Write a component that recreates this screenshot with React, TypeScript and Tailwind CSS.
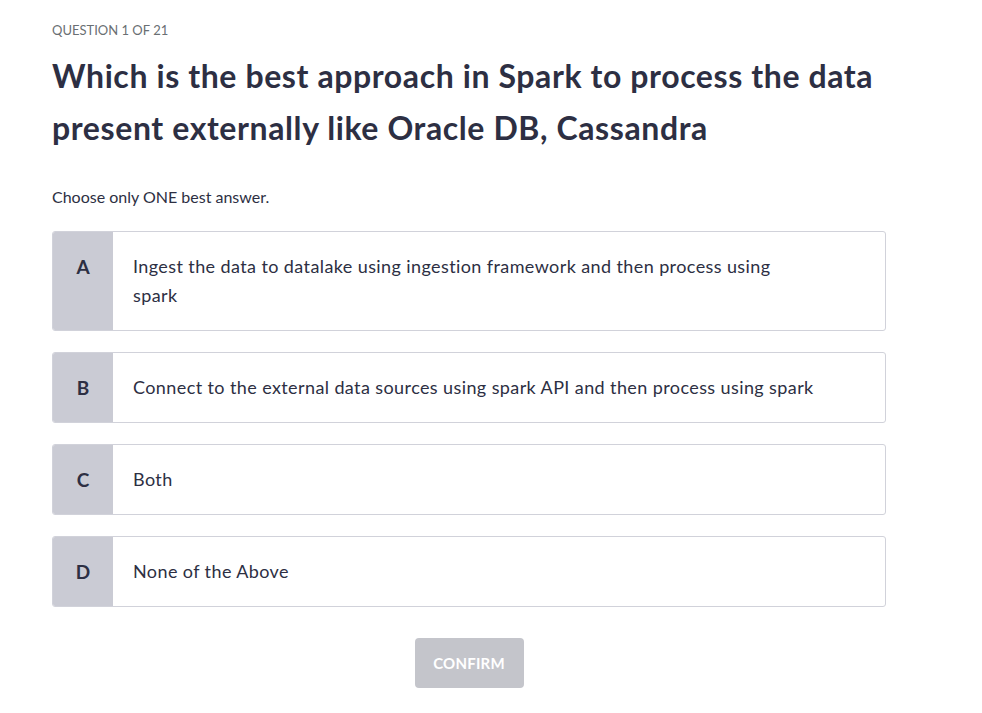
import React from "react";

const options: { k: string; t: React.ReactNode }[] = [
  {
    k: "A",
    t: (
      <>
        Ingest the data to datalake using ingestion framework and then process using
        <br />
        spark
      </>
    ),
  },
  { k: "B", t: "Connect to the external data sources using spark API and then process using spark" },
  { k: "C", t: "Both" },
  { k: "D", t: "None of the Above" },
];

export default function App() {
  return (
    <div
      className="min-h-screen bg-white text-[#2d2f43]"
      style={{ fontFamily: "Lato, 'Open Sans', sans-serif" }}
    >
      <div className="w-[834px] ml-[52px] pt-[21px]">
        <div className="text-[13px] leading-[18px] text-[#6a6f73]">QUESTION 1 OF 21</div>
        <h1 className="mt-[11px] text-[32px] leading-[52px] font-bold tracking-[0.6px] text-[#2d2f43]">
          Which is the best approach in Spark to process the data present externally like Oracle DB, Cassandra
        </h1>
        <div className="mt-[33px] text-[16px] leading-[20px] text-[#2d2f43]">Choose only ONE best answer.</div>
        <div className="mt-[24px] flex flex-col gap-[21px]">
          {options.map((o) => (
            <div key={o.k} className="flex border border-[#d1d2da] rounded-[3px] overflow-hidden bg-white">
              <div className="w-[60px] shrink-0 bg-[#cacbd4] flex justify-center pt-[20px] text-[19px] leading-[29px] font-bold">
                {o.k}
              </div>
              <div className="pt-[20px] pb-[20px] pl-[20px] pr-[20px] text-[18px] leading-[29px] tracking-[0.4px]">{o.t}</div>
            </div>
          ))}
        </div>
        <div className="mt-[31px] flex justify-center">
          <button className="w-[109px] h-[50px] rounded-[4px] bg-[#c4c5cb] text-white font-bold text-[15px] tracking-[0.2px]">
            CONFIRM
          </button>
        </div>
      </div>
    </div>
  );
}
